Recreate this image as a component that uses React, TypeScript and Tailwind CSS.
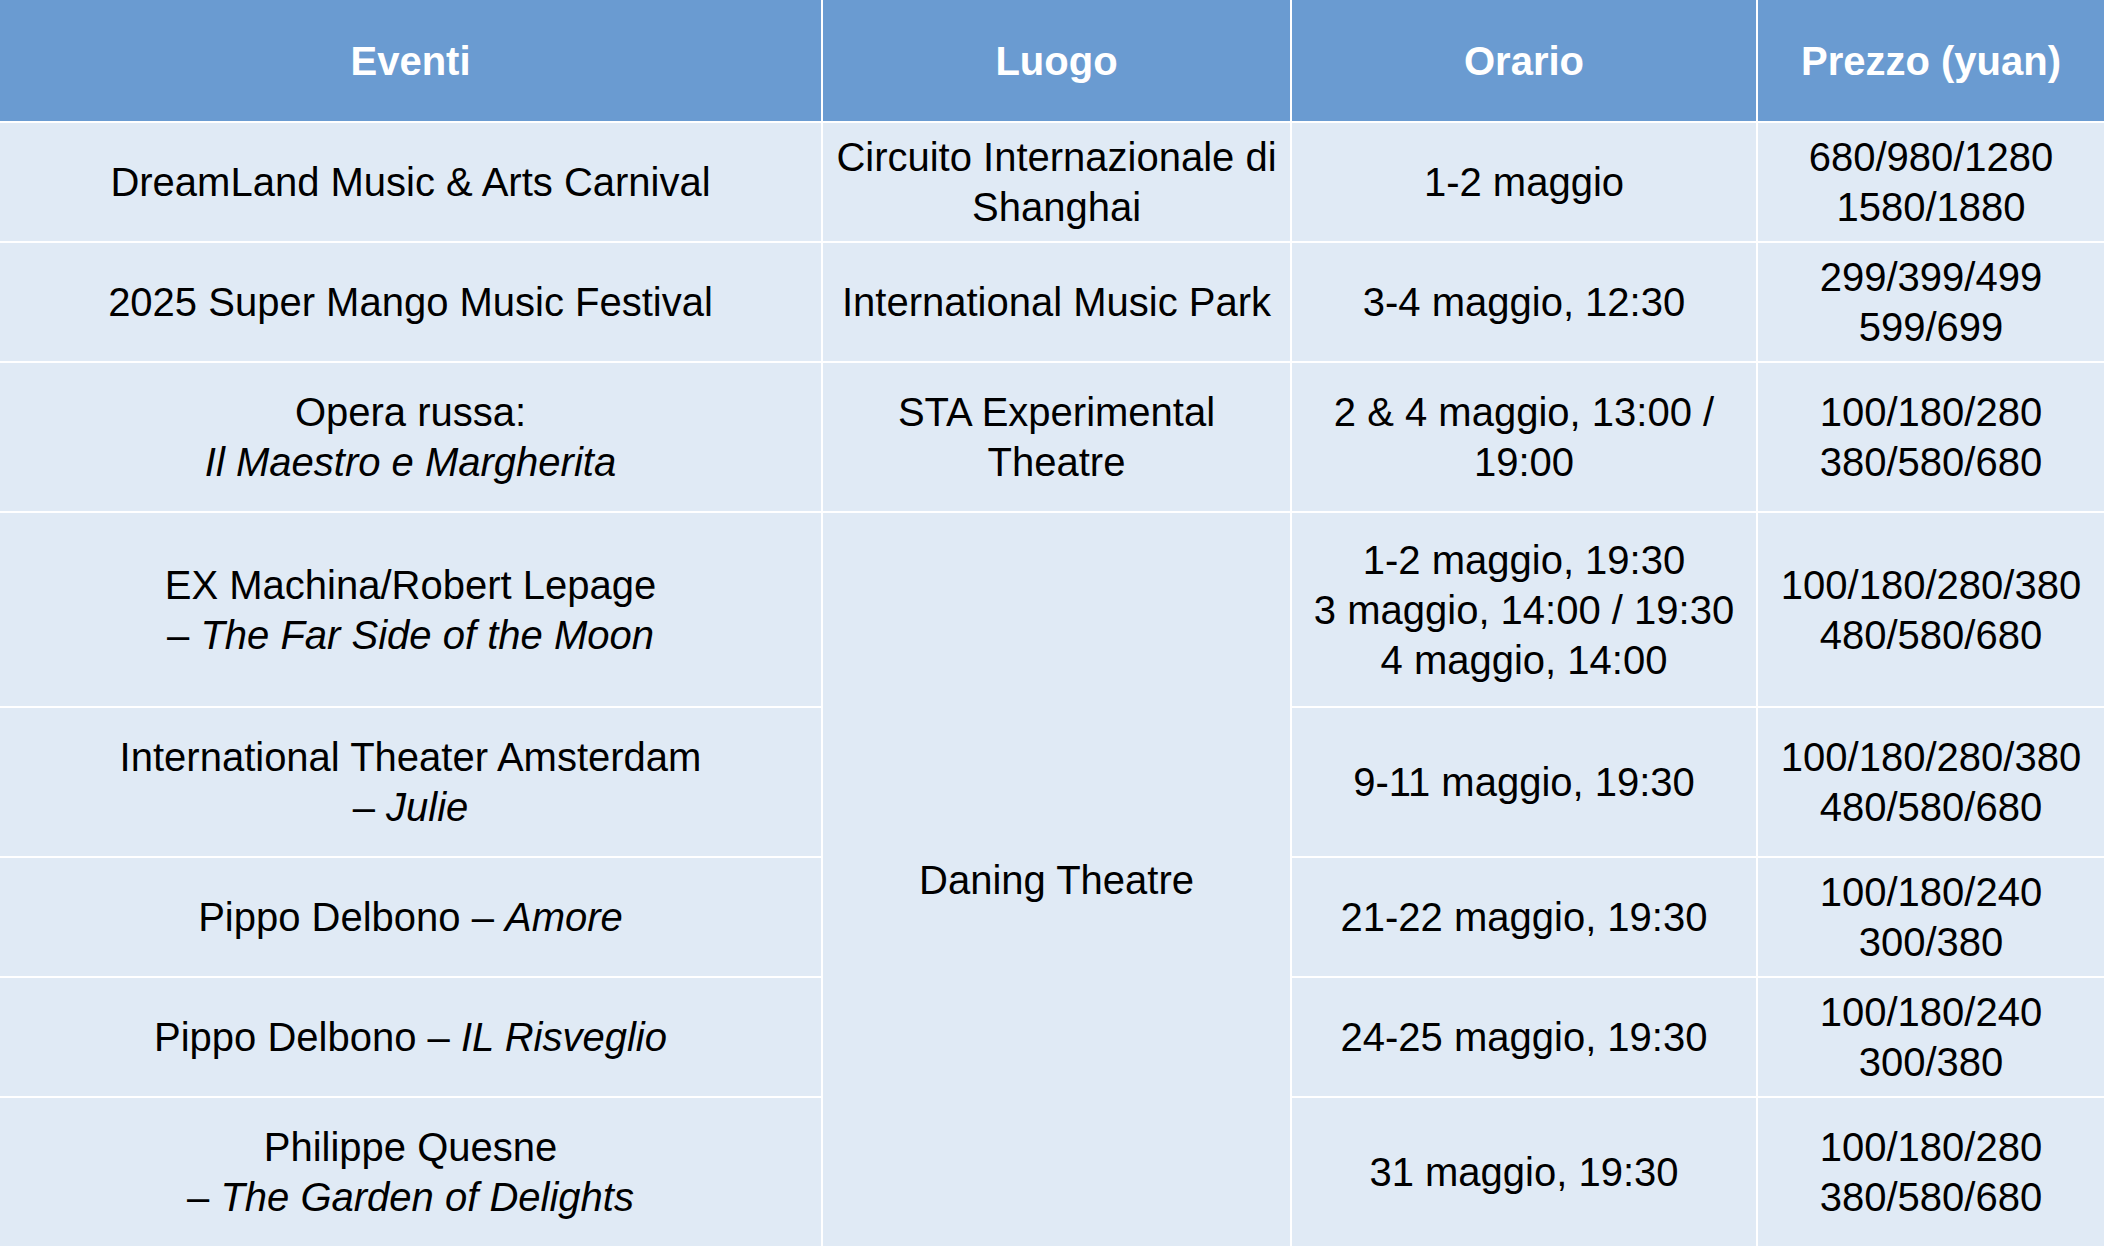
import React from 'react'

const font = { fontFamily: '"Liberation Sans", Arial, Helvetica, sans-serif' }

function Head({ children }: { children: React.ReactNode }) {
  return (
    <div className="flex items-center justify-center bg-[#6a9bd1] text-[40px] leading-[50px] font-bold text-white">
      {children}
    </div>
  )
}

function Cell({
  children,
  className = '',
}: {
  children: React.ReactNode
  className?: string
}) {
  return (
    <div
      className={`flex items-center justify-center bg-[#e0eaf5] text-center text-[40px] leading-[50px] whitespace-nowrap text-black ${className}`}
    >
      <div>{children}</div>
    </div>
  )
}

export default function App() {
  return (
    <div className="h-[1246px] w-[2104px] bg-white" style={font}>
      <div className="grid h-[1246px] w-[2104px] grid-cols-[821px_467px_464px_346px] grid-rows-[121px_118px_118px_148px_193px_148px_118px_118px_148px] gap-[2px] bg-white">
        {/* header */}
        <Head>Eventi</Head>
        <Head>Luogo</Head>
        <Head>Orario</Head>
        <Head>Prezzo (yuan)</Head>

        {/* row 1 */}
        <Cell>DreamLand Music &amp; Arts Carnival</Cell>
        <Cell>
          Circuito Internazionale di
          <br />
          Shanghai
        </Cell>
        <Cell>1-2 maggio</Cell>
        <Cell>
          680/980/1280
          <br />
          1580/1880
        </Cell>

        {/* row 2 */}
        <Cell>2025 Super Mango Music Festival</Cell>
        <Cell>International Music Park</Cell>
        <Cell>3-4 maggio, 12:30</Cell>
        <Cell>
          299/399/499
          <br />
          599/699
        </Cell>

        {/* row 3 */}
        <Cell>
          Opera russa:
          <br />
          <i>Il Maestro e Margherita</i>
        </Cell>
        <Cell>
          STA Experimental
          <br />
          Theatre
        </Cell>
        <Cell>
          2 &amp; 4 maggio, 13:00 /
          <br />
          19:00
        </Cell>
        <Cell>
          100/180/280
          <br />
          380/580/680
        </Cell>

        {/* row 4 */}
        <Cell>
          EX Machina/Robert Lepage
          <br />– <i>The Far Side of the Moon</i>
        </Cell>
        <Cell className="row-span-5">Daning Theatre</Cell>
        <Cell>
          1-2 maggio, 19:30
          <br />
          3 maggio, 14:00 / 19:30
          <br />4 maggio, 14:00
        </Cell>
        <Cell>
          100/180/280/380
          <br />
          480/580/680
        </Cell>

        {/* row 5 */}
        <Cell>
          International Theater Amsterdam
          <br />– <i>Julie</i>
        </Cell>
        <Cell>9-11 maggio, 19:30</Cell>
        <Cell>
          100/180/280/380
          <br />
          480/580/680
        </Cell>

        {/* row 6 */}
        <Cell>
          Pippo Delbono – <i>Amore</i>
        </Cell>
        <Cell>21-22 maggio, 19:30</Cell>
        <Cell>
          100/180/240
          <br />
          300/380
        </Cell>

        {/* row 7 */}
        <Cell>
          Pippo Delbono – <i>IL Risveglio</i>
        </Cell>
        <Cell>24-25 maggio, 19:30</Cell>
        <Cell>
          100/180/240
          <br />
          300/380
        </Cell>

        {/* row 8 */}
        <Cell>
          Philippe Quesne
          <br />– <i>The Garden of Delights</i>
        </Cell>
        <Cell>31 maggio, 19:30</Cell>
        <Cell>
          100/180/280
          <br />
          380/580/680
        </Cell>
      </div>
    </div>
  )
}
